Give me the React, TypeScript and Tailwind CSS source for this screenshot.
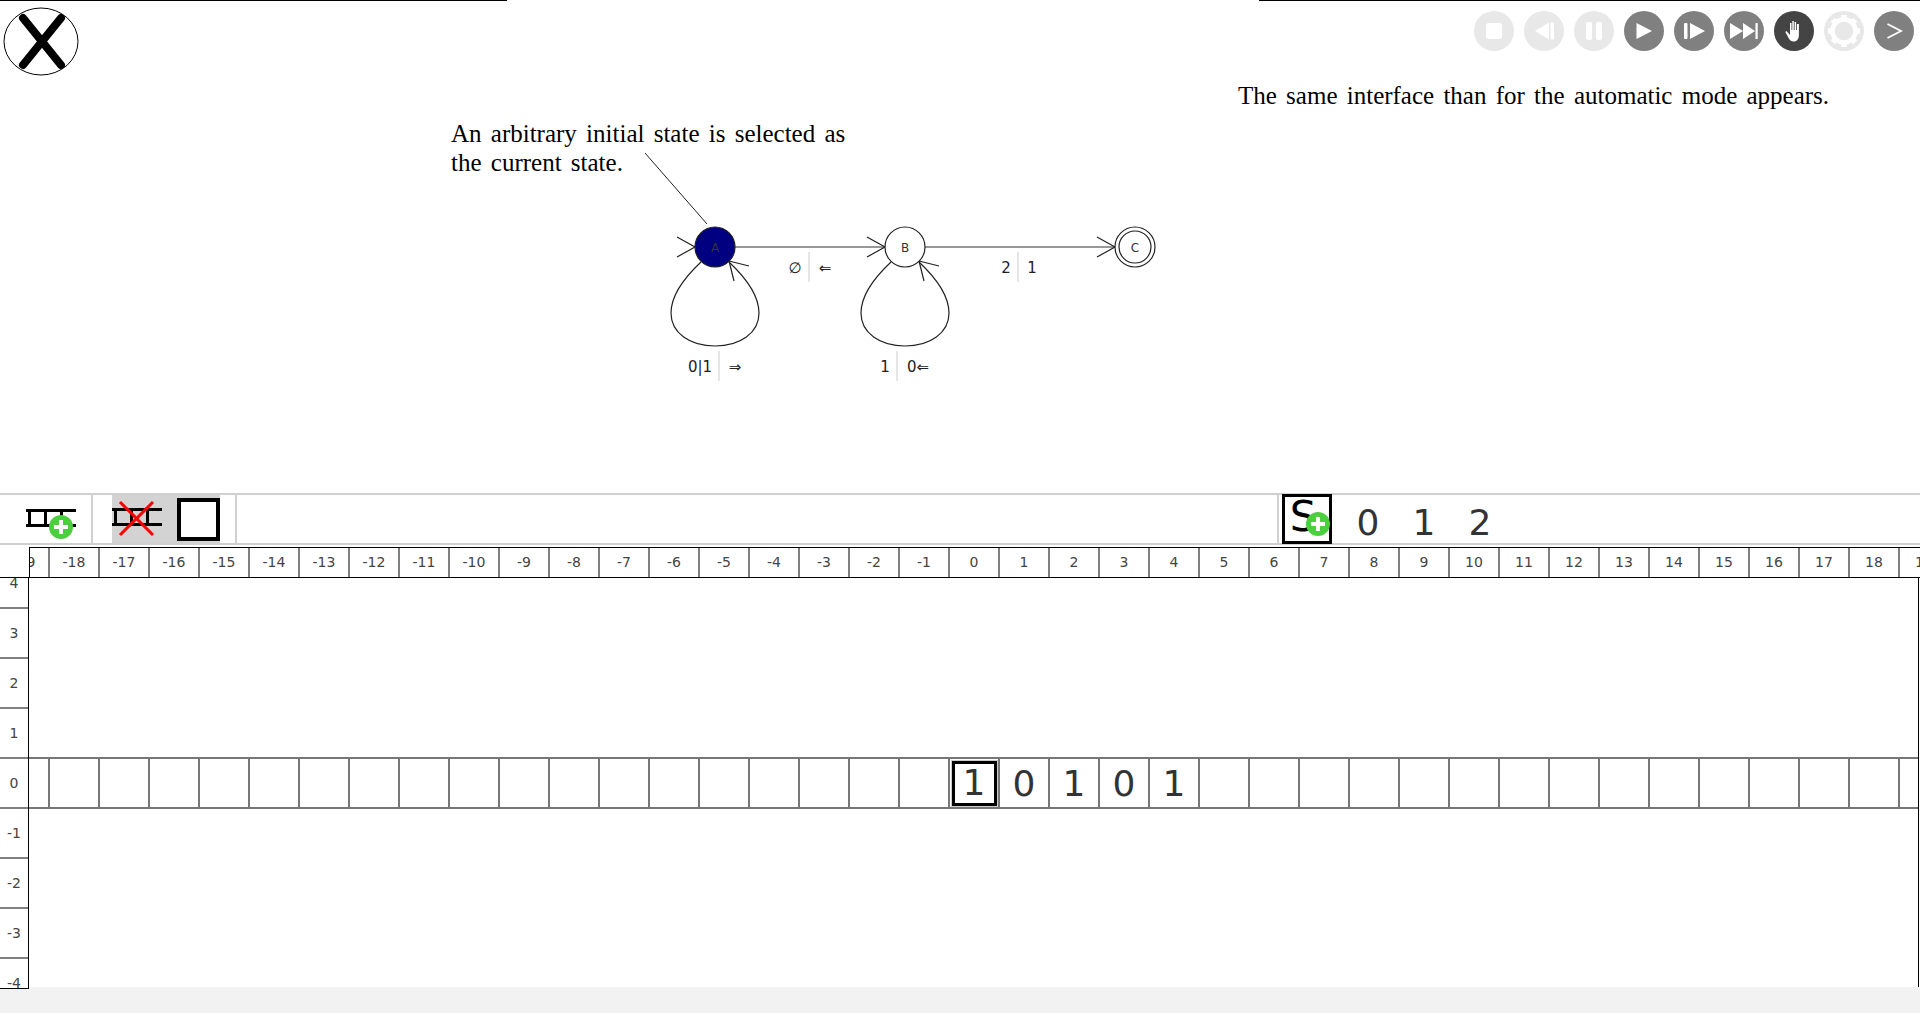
const COLUMNS = Array.from({ length: 37 }, (_, i) => i - 18);
const ROWS_ABOVE = [3, 2, 1];
const ROWS_BELOW = [-1, -2, -3];
const TAPE: Record<number, string> = { 0: '1', 1: '0', 2: '1', 3: '0', 4: '1' };
const SYMBOLS = ['0', '1', '2'];
const GEAR_TEETH = [0, 45, 90, 135, 180, 225, 270, 315];

function ControlButton({ tone, children }: { tone: 'off' | 'on' | 'active'; children: React.ReactNode }) {
    const bg = tone === 'off' ? 'bg-[#e8e8e8]' : tone === 'on' ? 'bg-[#808080]' : 'bg-[#444444]';
    return <div className={`flex h-10 w-10 items-center justify-center rounded-full ${bg}`}>{children}</div>;
}

function Controls() {
    return (
        <div className="mt-[10px] flex gap-[10px] pr-[6px]">
            <ControlButton tone="off">
                <div className="h-4 w-4 rounded-[3px] bg-white" />
            </ControlButton>
            <ControlButton tone="off">
                <svg width="20" height="18" viewBox="0 0 20 18" fill="white">
                    <path d="M15 0.5v17L1 9z" />
                    <rect x="16.5" y="0.5" width="3.5" height="17" rx="1" />
                </svg>
            </ControlButton>
            <ControlButton tone="off">
                <svg width="16" height="18" viewBox="0 0 16 18" fill="white">
                    <rect x="0" y="0" width="6" height="18" rx="2" />
                    <rect x="10" y="0" width="6" height="18" rx="2" />
                </svg>
            </ControlButton>
            <ControlButton tone="on">
                <svg width="16" height="16" viewBox="0 0 16 16" fill="white">
                    <path d="M0.5 0v16L16 8z" />
                </svg>
            </ControlButton>
            <ControlButton tone="on">
                <svg width="21" height="16" viewBox="0 0 21 16" fill="white">
                    <rect x="0" y="0" width="3.5" height="16" rx="1" />
                    <path d="M6 0v16L21 8z" />
                </svg>
            </ControlButton>
            <ControlButton tone="on">
                <svg width="28" height="16" viewBox="0 0 28 16" fill="white">
                    <path d="M0 0v16l13-8z" />
                    <path d="M13 0v16l12-8z" />
                    <rect x="25.5" y="0" width="2.2" height="16" />
                </svg>
            </ControlButton>
            <ControlButton tone="active">
                <svg width="18" height="22" viewBox="0 0 18 22" fill="white">
                    <path d="M5 10V3h1.5v7h.8V1h1.5v9h.8V2h1.5v8h.8V4H13.9v11c0 4-2 6.500-5 6.500-2.500 0-4-1-5-3L.6 12.500c-.4-.8.8-1.600 1.500-.8L5 15z" />
                </svg>
            </ControlButton>
            <ControlButton tone="off">
                <svg width="32" height="32" viewBox="-16 -16 32 32">
                    <circle r="11.500" fill="none" stroke="white" strokeWidth="4.500" />
                    {GEAR_TEETH.map((deg) => (
                        <rect key={deg} x="-2.800" y="-16" width="5.600" height="4" fill="white" transform={`rotate(${deg})`} />
                    ))}
                </svg>
            </ControlButton>
            <ControlButton tone="on">
                <svg width="20" height="20" viewBox="0 0 20 20" fill="none" stroke="white" strokeWidth="1.800">
                    <path d="M3.500 3L17 10L3.500 17" />
                </svg>
            </ControlButton>
        </div>
    );
}

function Loop({ dx }: { dx: number }) {
    return (
        <g transform={`translate(${dx} 0)`} fill="none" stroke="#222" strokeWidth="1.2">
            <path d="M701 262C685 277 671 295 671 313C671 333 690 346 715 346C740 346 759 333 759 313C759 295 745 277 729 262" />
            <path d="M749 266L729 261L734 281" />
        </g>
    );
}

function Entry({ x }: { x: number }) {
    return <path d={`M${x - 18} 237L${x} 247L${x - 18} 257`} fill="none" stroke="#222" strokeWidth="1.2" />;
}

function Label({ x, y, text }: { x: number; y: number; text: string }) {
    return (
        <text x={x} y={y} textAnchor="middle" fontSize="15" fill="#222" fontFamily="'DejaVu Sans', sans-serif">
            {text}
        </text>
    );
}

function Automaton() {
    return (
        <svg className="absolute left-0 top-0" width="1920" height="493" viewBox="0 0 1920 493">
            <path d="M645 153L707 224" stroke="#222" strokeWidth="1" />
            <path d="M735 247H885M925 247H1115" stroke="#777" strokeWidth="1.6" />
            <Loop dx={0} />
            <Loop dx={190} />
            <Entry x={695} />
            <Entry x={885} />
            <Entry x={1115} />
            <circle cx="715" cy="247" r="20" fill="#000080" stroke="#222" strokeWidth="1.2" />
            <circle cx="905" cy="247" r="20" fill="white" stroke="#222" strokeWidth="1.2" />
            <circle cx="1135" cy="247" r="20" fill="white" stroke="#222" strokeWidth="1.2" />
            <circle cx="1135" cy="247" r="16" fill="white" stroke="#222" strokeWidth="1.2" />
            <g textAnchor="middle" fontSize="12" fill="#333" fontFamily="'DejaVu Sans', sans-serif">
                <text x="715" y="252">A</text>
                <text x="905" y="252">B</text>
                <text x="1135" y="252">C</text>
            </g>
            <path d="M809 252V282M719 351V381M897 351V381M1018 252V282" stroke="#ccc" strokeWidth="1" />
            <Label x={795} y={273} text="∅" />
            <Label x={825} y={273} text="⇐" />
            <Label x={700} y={372} text="0|1" />
            <Label x={735} y={372} text="⇒" />
            <Label x={885} y={372} text="1" />
            <Label x={918} y={372} text="0⇐" />
            <Label x={1006} y={273} text="2" />
            <Label x={1032} y={273} text="1" />
        </svg>
    );
}

function GreenPlus({ cx, cy }: { cx: number; cy: number }) {
    return (
        <g>
            <circle cx={cx} cy={cy} r="12" fill="#4ccf3f" />
            <path d={`M${cx - 7} ${cy}H${cx + 7}M${cx} ${cy - 7}V${cy + 7}`} stroke="white" strokeWidth="4" />
        </g>
    );
}

function TapeGlyph() {
    return <path d="M0 2.500H50M0 17.500H50M3.500 2.500V17.500M19.500 2.500V17.500M35.500 2.500V17.500" stroke="black" strokeWidth="3" fill="none" />;
}

function Toolbar() {
    return (
        <div className="flex h-[52px] shrink-0 items-stretch border-y-2 border-[#d0d0d0]">
            <div className="flex w-[93px] items-center border-r-2 border-[#d0d0d0] pl-[26px]">
                <svg width="62" height="46" viewBox="0 0 62 46">
                    <g transform="translate(0 12)">
                        <TapeGlyph />
                    </g>
                    <GreenPlus cx={35} cy={31} />
                </svg>
            </div>
            <div className="flex w-[144px] items-stretch border-r-2 border-[#d0d0d0] pl-[19px]">
                <div className="flex w-[108px] items-center justify-between bg-[#d3d3d3]">
                    <svg width="50" height="40" viewBox="0 0 50 40">
                        <g transform="translate(0 8)">
                            <TapeGlyph />
                        </g>
                        <path d="M8 3L41 36M41 3L8 36" stroke="#ff0000" strokeWidth="3" />
                    </svg>
                    <div className="h-[43px] w-[43px] border-4 border-black bg-white" />
                </div>
            </div>
            <div className="ml-[1040px] flex items-center border-l-2 border-[#d0d0d0] pl-[3px]">
                <div className="relative flex h-[50px] w-[50px] shrink-0 items-center justify-center border-[3px] border-black font-['DejaVu_Sans',sans-serif] text-[42px] leading-none">
                    <span className="-mt-[4px] -ml-[8px]">S</span>
                    <svg className="absolute left-[20px] top-[14px]" width="26" height="26" viewBox="0 0 26 26">
                        <GreenPlus cx={13} cy={13} />
                    </svg>
                </div>
                <div className="ml-[8px] flex">
                    {SYMBOLS.map((s) => (
                        <span key={s} className="flex w-[56px] justify-center pt-[8px] font-['DejaVu_Sans',sans-serif] text-[36px] leading-none text-[#333333]">
                            {s}
                        </span>
                    ))}
                </div>
            </div>
        </div>
    );
}

function RulerHead() {
    return (
        <div className="mt-[2px] flex h-[31px] shrink-0 font-['DejaVu_Sans',sans-serif] text-[14px] text-[#444444]">
            <div className="w-[29px] shrink-0 border-b border-black" />
            <div className="flex flex-1 overflow-hidden border-y border-l border-black">
                <div className="flex w-[20px] shrink-0 justify-end overflow-hidden border-r-2 border-[#808080]">
                    <span className="flex w-[48px] shrink-0 items-center justify-center">-19</span>
                </div>
                {COLUMNS.map((c) => (
                    <div key={c} className="flex w-[50px] shrink-0 items-center justify-center border-r-2 border-[#808080]">
                        {c}
                    </div>
                ))}
                <div className="flex w-[48px] shrink-0 items-center justify-center">19</div>
            </div>
        </div>
    );
}

function SideRow({ n }: { n: number }) {
    return <div className="flex h-[50px] shrink-0 items-center justify-center border-b-2 border-[#808080]">{n}</div>;
}

function Tape() {
    return (
        <div className="flex h-[52px] shrink-0 border-y-2 border-[#777777]">
            <div className="w-[21px] shrink-0 border-r-2 border-[#777777]" />
            {COLUMNS.map((c) => (
                <div
                    key={c}
                    className="flex w-[50px] shrink-0 items-center justify-center border-r-2 border-[#777777] pt-[1px] font-['DejaVu_Sans',sans-serif] text-[36px] leading-none text-[#333333]"
                >
                    {c === 0 ? (
                        <div className="-mt-[1px] flex h-[45px] w-[45px] items-center justify-center border-[3px] border-black outline outline-1 outline-[#cccccc]">
                            {TAPE[c]}
                        </div>
                    ) : (
                        TAPE[c]
                    )}
                </div>
            ))}
        </div>
    );
}

function Grid() {
    return (
        <div className="flex h-[409px] shrink-0 items-start font-['DejaVu_Sans',sans-serif] text-[14px] text-[#444444]">
            <div className="relative z-10 flex h-[411px] w-[29px] shrink-0 flex-col overflow-hidden border-r border-b border-black bg-white">
                <div className="flex h-[31px] shrink-0 items-end overflow-hidden border-b-2 border-[#808080]">
                    <span className="flex h-[48px] w-full shrink-0 items-center justify-center">4</span>
                </div>
                {ROWS_ABOVE.map((n) => (
                    <SideRow key={n} n={n} />
                ))}
                <SideRow n={0} />
                {ROWS_BELOW.map((n) => (
                    <SideRow key={n} n={n} />
                ))}
                <span className="flex h-[48px] w-full shrink-0 items-center justify-center">-4</span>
            </div>
            <div className="mr-[1px] flex h-full flex-1 flex-col overflow-hidden border-r border-black pt-[179px]">
                <Tape />
            </div>
        </div>
    );
}

export default function App() {
    return (
        <div className="flex h-[1013px] w-[1920px] flex-col overflow-hidden bg-white">
            <div className="relative h-[493px] shrink-0">
                <div className="flex justify-between">
                    <div className="h-px w-[507px] bg-black" />
                    <div className="h-px w-[661px] bg-black" />
                </div>
                <div className="flex items-start justify-between">
                    <svg className="ml-[3px] mt-[6px]" width="77" height="70" viewBox="0 0 77 70">
                        <ellipse cx="38" cy="34.500" rx="37" ry="33.500" fill="white" stroke="black" strokeWidth="1" />
                        <path d="M20 11L58 58M58 11L20 58" stroke="black" strokeWidth="8" strokeLinecap="round" />
                    </svg>
                    <Controls />
                </div>
                <Automaton />
                <p className="absolute left-[451px] top-[119px] w-[420px] font-['Liberation_Serif',serif] text-[25px] leading-[29px] text-black [word-spacing:3px]">
                    An arbitrary initial state is selected as
                    <br />
                    the current state.
                </p>
                <p className="absolute left-[1238px] top-[81px] font-['Liberation_Serif',serif] text-[25px] leading-[29px] text-black [word-spacing:3px]">
                    The same interface than for the automatic mode appears.
                </p>
            </div>
            <Toolbar />
            <RulerHead />
            <Grid />
            <div className="flex-1 bg-[#f2f2f2]" />
        </div>
    );
}
